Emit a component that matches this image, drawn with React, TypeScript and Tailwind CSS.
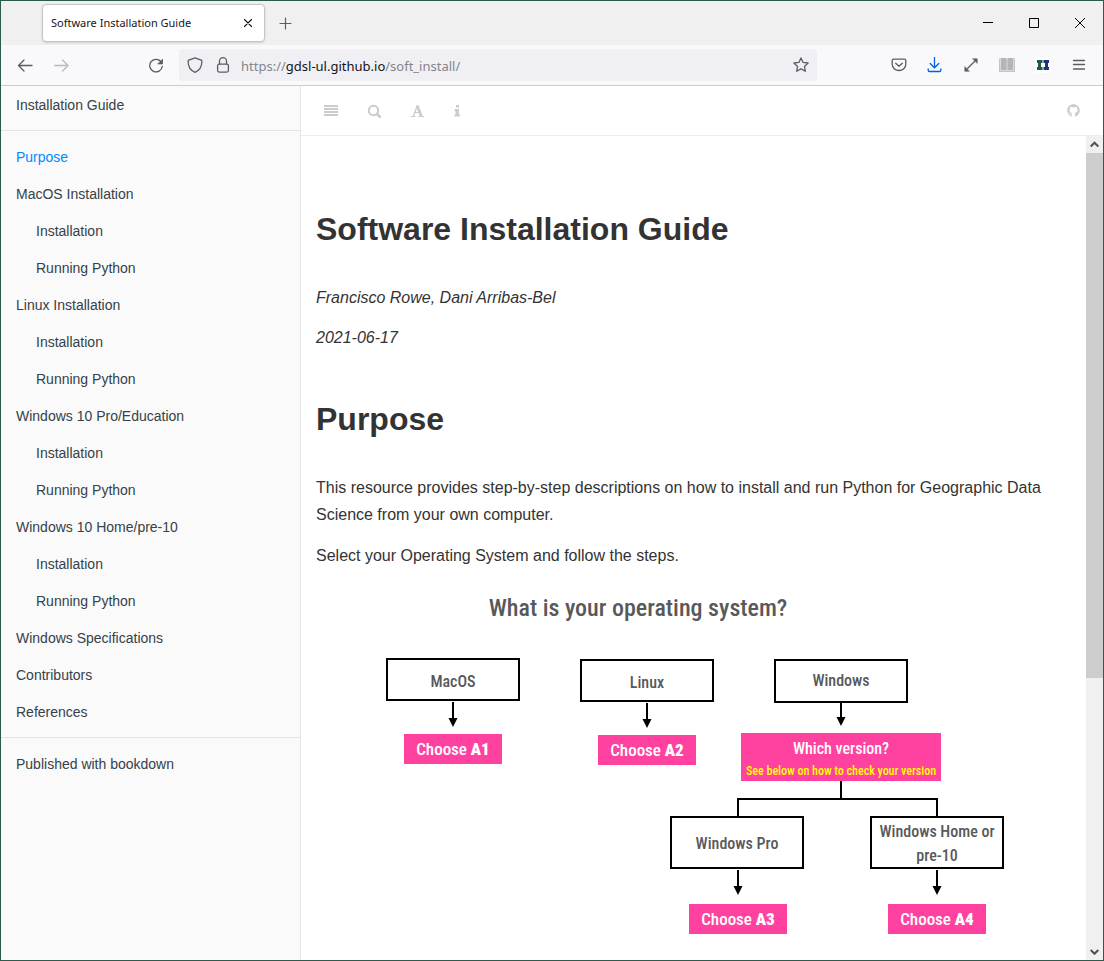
import React from "react";
import { FaGithub } from "react-icons/fa";

type NavItem = { label: string; nested?: boolean; active?: boolean };

const navItems: NavItem[] = [
  { label: "Purpose", active: true },
  { label: "MacOS Installation" },
  { label: "Installation", nested: true },
  { label: "Running Python", nested: true },
  { label: "Linux Installation" },
  { label: "Installation", nested: true },
  { label: "Running Python", nested: true },
  { label: "Windows 10 Pro/Education" },
  { label: "Installation", nested: true },
  { label: "Running Python", nested: true },
  { label: "Windows 10 Home/pre-10" },
  { label: "Installation", nested: true },
  { label: "Running Python", nested: true },
  { label: "Windows Specifications" },
  { label: "Contributors" },
  { label: "References" },
];

function Icon({ children, className = "" }: { children: React.ReactNode; className?: string }) {
  return (
    <svg
      viewBox="0 0 16 16"
      width="16"
      height="16"
      fill="none"
      stroke="currentColor"
      strokeWidth="1.3"
      strokeLinecap="round"
      strokeLinejoin="round"
      className={className}
      aria-hidden="true"
    >
      {children}
    </svg>
  );
}

function BarButton({ label, children, className = "" }: { label: string; children: React.ReactNode; className?: string }) {
  return (
    <button type="button" aria-label={label} className={`flex h-8 w-9 shrink-0 items-center justify-center ${className}`}>
      {children}
    </button>
  );
}

function TabStrip() {
  return (
    <div className="flex h-11 shrink-0 items-stretch bg-[#f0f0f0]">
      <div className="my-[3px] ml-[41px] flex w-[223px] items-center rounded border border-[#c3c3cc] bg-white pr-2 pl-2 shadow-sm">
        <span className="flex-1 whitespace-nowrap font-['Noto_Sans',sans-serif] text-[11px] text-[#15141a]">
          Software Installation Guide
        </span>
        <button type="button" aria-label="Close tab" className="text-[#15141a]">
          <Icon>
            <path d="M4.500 4.500l7 7M11.500 4.500l-7 7" strokeWidth="1.1" />
          </Icon>
        </button>
      </div>
      <button type="button" aria-label="New tab" className="flex w-10 items-center justify-center text-[#5b5b66]">
        <Icon>
          <path d="M8.500 3v11M3 8.500h11" strokeWidth="1.200" />
        </Icon>
      </button>
      <div className="ml-auto flex text-black">
        <button type="button" aria-label="Minimize" className="flex w-[46px] items-center justify-center">
          <svg width="10" height="10" stroke="currentColor" aria-hidden="true">
            <path d="M0 4.500h10" />
          </svg>
        </button>
        <button type="button" aria-label="Maximize" className="flex w-[46px] items-center justify-center">
          <svg width="10" height="10" fill="none" stroke="currentColor" aria-hidden="true">
            <path d="M.5.5h9v9h-9z" />
          </svg>
        </button>
        <button type="button" aria-label="Close window" className="flex w-[46px] items-center justify-center">
          <svg width="10" height="10" stroke="currentColor" aria-hidden="true">
            <path d="M0 0l10 10M10 0L0 10" />
          </svg>
        </button>
      </div>
    </div>
  );
}

function AddressRow() {
  return (
    <div className="flex h-[41px] shrink-0 items-center border-b border-[#ccc] bg-[#f9f9fb] px-1.5 text-[#5b5b66]">
      <BarButton label="Back">
        <Icon>
          <path d="M15 8.500H2M7 3L1.500 8.500 7 14" />
        </Icon>
      </BarButton>
      <BarButton label="Forward" className="opacity-40">
        <Icon>
          <path d="M1.500 8.500h13M9.500 3L15 8.500 9.500 14" />
        </Icon>
      </BarButton>
      <BarButton label="Reload" className="ml-[59px]">
        <Icon>
          <path d="M13.300 5.100A6.300 6.300 0 1 0 14.300 9.500" />
          <path d="M14.500 2.500v4.400h-4.400z" fill="currentColor" strokeWidth="0.8" />
        </Icon>
      </BarButton>
      <div className="ml-[5px] flex h-8 min-w-0 flex-1 items-center rounded bg-[#f0f0f4] px-2">
        <Icon className="shrink-0">
          <path d="M8 .9l6.200 2.300c.5.2.7.5.7.9C14.900 9.500 12.600 13.600 8 15.300 3.400 13.600 1.100 9.500 1.100 4.100c0-.4.2-.7.7-.9z" />
        </Icon>
        <Icon className="ml-3 shrink-0">
          <rect x="2.600" y="7.200" width="10.800" height="7.900" rx="1.500" />
          <path d="M4.500 7V4.200a3.500 3.500 0 0 1 7 0V7" />
        </Icon>
        <p className="ml-2.5 flex-1 whitespace-nowrap pt-0.5 font-['Noto_Sans',sans-serif] text-[13px] leading-5 text-[#84848c]">
          https://<span className="text-[#15141a]">gdsl-ul.github.io</span>/soft_install/
        </p>
        <button type="button" aria-label="Bookmark this page">
          <Icon>
            <path d="M8 .9l2.100 4.500 5 .6-3.700 3.400 1 4.900L8 11.900l-4.400 2.400 1-4.900L.9 6l5-.6z" />
          </Icon>
        </button>
      </div>
      <div className="ml-16 flex">
        <BarButton label="Save to Pocket">
          <Icon>
            <path d="M2.600 2.200h10.800c.9 0 1.400.6 1.400 1.400v3.600a6.800 6.300 0 0 1-13.600 0V3.600c0-.8.5-1.400 1.400-1.400z" />
            <path d="M4.700 6.200L8 9.300l3.300-3.100" />
          </Icon>
        </BarButton>
        <BarButton label="Downloads" className="text-[#0061e0]">
          <Icon>
            <path d="M7.500.6v9.900M3.200 6.500l4.300 4.200 4.300-4.200M1.200 11.800v1.400c0 .8.500 1.300 1.300 1.300h10c.8 0 1.300-.5 1.300-1.300v-1.400" />
          </Icon>
        </BarButton>
        <BarButton label="Full screen">
          <Icon>
            <path d="M3 13L13 3" />
            <path d="M9.900 1.800h4.300v4.300zM1.800 9.900v4.300h4.300z" fill="currentColor" strokeWidth="0.6" />
          </Icon>
        </BarButton>
        <BarButton label="Library">
          <svg width="16" height="16" viewBox="0 0 16 16" aria-hidden="true">
            <path d="M0 1h16v14H9l-1-.6-1 .6H0z" fill="#dadada" />
            <path d="M0 2h1v12h6l1 .6 1-.6h6V2h1v13H0z" fill="#c4c4c4" />
            <path d="M2 1h4.500l1 1v11.500l-1-.6H2zM14 1H9.500l-1 1v11.500l1-.6H14z" fill="#b5b5b5" />
          </svg>
        </BarButton>
        <BarButton label="Extension">
          <svg width="16" height="16" viewBox="0 0 16 16" aria-hidden="true">
            <rect width="16" height="16" rx="1" fill="#fff" />
            <path d="M2 3h5.500v3H6v4h1.500v3H2v-3h1V6H2z" fill="#1d5c45" />
            <path d="M8.500 3H14v3h-1v4h1v3H8.500v-3H10V6H8.500z" fill="#25307d" />
            <path d="M7.500 3h1v3h-1zM7.500 10h1v3h-1z" fill="#8c98a8" />
          </svg>
        </BarButton>
        <BarButton label="Menu">
          <Icon>
            <path d="M2.500 3.500h11M2.500 7.500h11M2.500 12h11" />
          </Icon>
        </BarButton>
      </div>
    </div>
  );
}

function Sidebar() {
  return (
    <nav aria-label="Table of contents" className="flex w-[300px] shrink-0 flex-col border-r border-[#e4e4e4] bg-[#fafafa] text-sm text-[#364149]">
      <a href="#top" className="flex h-[45px] items-center border-b border-[#e4e4e4] px-[15px] pb-1.5">
        Installation Guide
      </a>
      <ul className="border-b border-[#e4e4e4] py-[7px]">
        {navItems.map((item, i) => (
          <li key={i}>
            <a
              href="#section"
              className={`flex h-[37px] items-center pr-[15px] ${item.nested ? "pl-[35px]" : "pl-[15px]"} ${item.active ? "text-[#008cff]" : ""}`}
            >
              {item.label}
            </a>
          </li>
        ))}
      </ul>
      <a href="#bookdown" className="mt-[7px] flex h-[37px] items-center px-[15px]">
        Published with bookdown
      </a>
    </nav>
  );
}

function BookToolbar() {
  return (
    <header className="flex h-[50px] shrink-0 items-center border-b border-[#ededed] pr-[23px] pl-[23px] text-[#ccc]">
      <button type="button" aria-label="Toggle sidebar">
        <svg width="14" height="12" fill="currentColor" aria-hidden="true">
          <path d="M0 0h14v2H0zM0 3h14v2H0zM0 6h14v2H0zM0 9h14v2H0z" />
        </svg>
      </button>
      <button type="button" aria-label="Search" className="ml-[29px]">
        <svg width="14" height="14" fill="none" stroke="currentColor" strokeWidth="2" aria-hidden="true">
          <circle cx="6.500" cy="6.500" r="4.700" />
          <path d="M10 10l3 3" strokeWidth="2.600" strokeLinecap="round" />
        </svg>
      </button>
      <button type="button" aria-label="Font settings" className="ml-[30px]">
        <svg width="13" height="14" fill="none" stroke="currentColor" aria-hidden="true">
          <path d="M0 12.500h4.500M7 12.500h6M3.500 8.500h5" />
          <path d="M2.300 12.500L6.300 1.500" strokeWidth="1.400" />
          <path d="M6.200 1.500l4.200 11" strokeWidth="2.800" />
        </svg>
      </button>
      <button type="button" aria-label="Information" className="ml-[30px]">
        <svg width="7" height="13" fill="currentColor" aria-hidden="true">
          <path d="M2 1h3v2.500H2zM.5 5H5v5.500h1v2H.5v-2h1V7h-1z" />
        </svg>
      </button>
      <a href="#github" aria-label="GitHub" className="ml-auto">
        <FaGithub size={13} />
      </a>
    </header>
  );
}

function Box({ x, y, h, children }: { x: number; y: number; h: number; children: React.ReactNode }) {
  return (
    <g>
      <rect x={x} y={y} width="132" height={h} fill="#fff" stroke="#000" strokeWidth="2" />
      <g className="fill-[#58595b] text-[16px] font-medium">{children}</g>
    </g>
  );
}

function Arrow({ x, y }: { x: number; y: number }) {
  return (
    <g>
      <path d={`M${x} ${y}v18`} stroke="#000" strokeWidth="2" />
      <path d={`M${x - 4.5} ${y + 16}h9l-4.500 9z`} fill="#000" />
    </g>
  );
}

function Choice({ x, y, code }: { x: number; y: number; code: string }) {
  return (
    <g>
      <rect x={x} y={y} width="98" height="30" fill="#ff429f" />
      <text x={x + 49} y={y + 21} textAnchor="middle" className="fill-white text-[17px] font-medium">
        Choose <tspan className="font-black">{code}</tspan>
      </text>
    </g>
  );
}

function Flowchart() {
  return (
    <svg
      viewBox="0 0 755 370"
      role="img"
      aria-label="What is your operating system?"
      className="mt-2 block w-full font-['Roboto_Condensed','Open_Sans_Condensed','DejaVu_Sans_Condensed',sans-serif]"
    >
      <text x="322" y="39" textAnchor="middle" className="fill-[#58595b] text-[24px] font-medium">
        What is your operating system?
      </text>
      <Box x={71} y={82} h={41}>
        <text x="137" y="110" textAnchor="middle">MacOS</text>
      </Box>
      <Arrow x={137} y={125} />
      <Choice x={88} y={157} code="A1" />
      <Box x={265} y={83} h={41}>
        <text x="331" y="111" textAnchor="middle">Linux</text>
      </Box>
      <Arrow x={331} y={126} />
      <Choice x={282} y={158} code="A2" />
      <Box x={459} y={83} h={42}>
        <text x="525" y="109" textAnchor="middle">Windows</text>
      </Box>
      <Arrow x={525} y={124} />
      <rect x="425" y="156" width="200" height="48" fill="#ff429f" />
      <text x="525" y="177" textAnchor="middle" className="fill-white text-[16px] font-medium">Which version?</text>
      <text x="525" y="198" textAnchor="middle" className="fill-[#ffff00] text-[12px] font-medium">See below on how to check your version</text>
      <path d="M525 204v18M422 240v-18h199v18" fill="none" stroke="#000" strokeWidth="2" />
      <Box x={355} y={240} h={51}>
        <text x="421" y="272" textAnchor="middle">Windows Pro</text>
      </Box>
      <Box x={555} y={240} h={51}>
        <text x="621" y="260" textAnchor="middle">Windows Home or</text>
        <text x="621" y="284" textAnchor="middle">pre-10</text>
      </Box>
      <Arrow x={422} y={293} />
      <Arrow x={621} y={293} />
      <Choice x={373} y={327} code="A3" />
      <Choice x={572} y={327} code="A4" />
    </svg>
  );
}

function Scrollbar() {
  return (
    <div className="flex w-[17px] shrink-0 flex-col bg-[#f0f0f0] text-[#505050]" aria-hidden="true">
      <div className="flex h-[17px] items-center justify-center">
        <svg width="9" height="7" fill="none" stroke="currentColor" strokeWidth="2">
          <path d="M.7 5.500L4.500 1.700l3.800 3.800" />
        </svg>
      </div>
      <div className="flex-1">
        <div className="h-[66.5%] bg-[#cdcdcd]" />
      </div>
      <div className="flex h-[17px] items-center justify-center">
        <svg width="9" height="7" fill="none" stroke="currentColor" strokeWidth="2">
          <path d="M.7 2l3.800 3.800L8.300 2" />
        </svg>
      </div>
    </div>
  );
}

export default function App() {
  return (
    <div className="flex h-screen flex-col overflow-hidden border border-[#2c5b4b] bg-white font-['Liberation_Sans',Arial,sans-serif]">
      <TabStrip />
      <AddressRow />
      <div className="flex min-h-0 flex-1">
        <Sidebar />
        <div className="flex min-w-0 flex-1 flex-col">
          <BookToolbar />
          <div className="flex min-h-0 flex-1">
            <main className="min-w-0 flex-1 overflow-hidden px-[15px] pt-[73px] text-base leading-[27px] text-[#333]">
              <h1 className="text-[32px] leading-10 font-bold">Software Installation Guide</h1>
              <p className="mt-[35px] italic">Francisco Rowe, Dani Arribas-Bel</p>
              <p className="mt-[13px] italic">2021-06-17</p>
              <h1 className="mt-12 text-[32px] leading-10 font-bold">Purpose</h1>
              <p className="mt-[35px]">
                This resource provides step-by-step descriptions on how to install and run Python for Geographic Data
                Science from your own computer.
              </p>
              <p className="mt-3.5">Select your Operating System and follow the steps.</p>
              <Flowchart />
            </main>
            <Scrollbar />
          </div>
        </div>
      </div>
    </div>
  );
}
